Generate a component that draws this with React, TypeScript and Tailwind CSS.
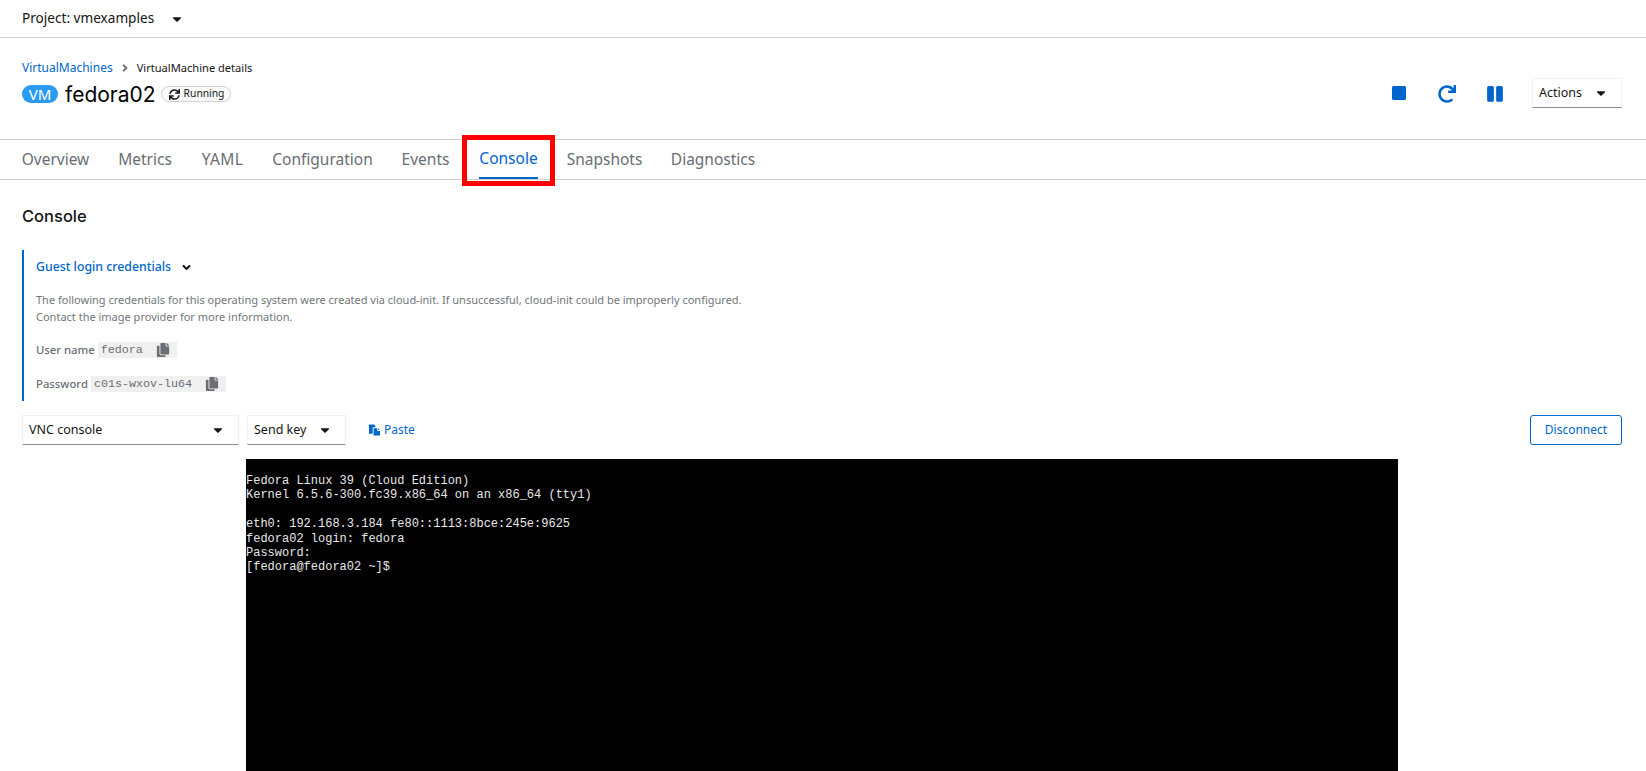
import { FaAngleDown, FaAngleRight, FaCaretDown, FaCopy, FaPause, FaRedo, FaStop, FaSync } from "react-icons/fa";

const tabs = [
  { label: "Overview", width: "w-[67px]" },
  { label: "Metrics", width: "w-[54px]" },
  { label: "YAML", width: "w-[43px] tracking-[0.4px]" },
  { label: "Configuration", width: "w-[99px]" },
  { label: "Events", width: "w-[49px]" },
  { label: "Console", width: "w-[59px]" },
  { label: "Snapshots", width: "w-[75px]" },
  { label: "Diagnostics", width: "w-[84px]" },
];
const terminal = [
  "Fedora Linux 39 (Cloud Edition)",
  "Kernel 6.5.6-300.fc39.x86_64 on an x86_64 (tty1)",
  "\u00a0",
  "eth0: 192.168.3.184 fe80::1113:8bce:245e:9625",
  "fedora02 login: fedora",
  "Password:",
  "[fedora@fedora02 ~]$",
];

function Cred({ label, value }: { label: string; value: string }) {
  return (
    <div className="flex items-center h-4 text-[11.3px] text-[#6a6e73]">
      <span className="font-medium mr-[3px]">{label}</span>
      <span className="flex items-center h-4 bg-[#f0f0f0] pl-[3px] pr-[7px] font-['Liberation_Mono',monospace] text-[11.7px] text-[#6a6e73]">
        <span className="pt-[2px]">{value}</span>
        <FaCopy className="ml-[13px] text-[14px] text-[#6a6e73]" />
      </span>
    </div>
  );
}

function Select({ label, className }: { label: string; className: string }) {
  return (
    <div className={`flex items-center justify-between h-[30px] border border-[#f0f0f0] border-b-[#8a8d90] pl-[6px] pr-[13px] text-[12.5px] text-[#151515] ${className}`}>
      <span>{label}</span>
      <FaCaretDown className="text-[14px] text-[#151515]" />
    </div>
  );
}

export default function App() {
  return (
    <div className="relative h-[771px] w-[1646px] overflow-hidden bg-white font-['Noto_Sans',sans-serif] text-[#151515]">
      <div className="flex h-[38px] items-center border-b border-[#d2d2d2] pl-[22px] text-[13.6px]">
        <span>Project: vmexamples</span>
        <FaCaretDown className="ml-[16px] text-[14px]" />
      </div>

      <div className="flex h-[102px] justify-between border-b border-[#d2d2d2] pl-[22px] pr-6">
        <div className="pt-[23px]">
          <div className="flex items-center h-[14px] text-[12px]">
            <span className="text-[#0066cc]">VirtualMachines</span>
            <FaAngleRight className="mx-[6px] text-[12px] text-[#6a6e73]" />
            <span className="text-[11.1px]">VirtualMachine details</span>
          </div>
          <div className="mt-[6px] flex items-center h-[26px]">
            <span className="flex h-[18px] w-9 items-center justify-center rounded-full bg-[#2b9af3] text-[15px] text-white">VM</span>
            <span className="ml-[7px] font-['Inter',sans-serif] text-[21px] leading-none text-black">fedora02</span>
            <span className="ml-[5px] flex h-4 items-center rounded-full border border-[#d2d2d2] bg-[#fafafa] pl-[7px] pr-[6px] text-[10.3px]">
              <FaSync className="mr-[4px] text-[11px]" />
              Running
            </span>
          </div>
        </div>
        <div className="flex items-start pt-[40px]">
          <FaStop className="mt-[7px] text-[16px] text-[#0066cc]" />
          <FaRedo className="ml-[31px] mt-[7px] text-[18px] text-[#0066cc]" />
          <FaPause className="ml-[30px] mt-[7px] text-[18px] text-[#0066cc]" />
          <div className="ml-[28px] flex h-[30px] w-[90px] items-center justify-between border border-[#f0f0f0] border-b-[#8a8d90] pl-[6px] pr-[13px] text-[12.5px]">
            <span>Actions</span>
            <FaCaretDown className="text-[14px]" />
          </div>
        </div>
      </div>

      <div className="flex h-10 gap-[29px] border-b border-[#d2d2d2] pl-[22px] text-[15.5px] text-[#6a6e73]">
        {tabs.map((t) => (
          <div
            key={t.label}
            className={
              t.label === "Console"
                ? `flex h-[39px] items-center justify-center whitespace-nowrap border-b-2 border-[#0066cc] text-[#0066cc] ${t.width}`
                : `flex h-[39px] items-center justify-center whitespace-nowrap ${t.width}`
            }
          >
            {t.label}
          </div>
        ))}
      </div>

      <div className="px-[22px] pr-6">
        <h1 className="mt-[25px] h-[22px] font-['Inter',sans-serif] text-[16.5px] font-medium leading-[22px] text-[#151515]">Console</h1>

        <div className="mt-[23px] h-[151px] border-l-[2px] border-[#0066cc] pl-[12px] pt-[8px]">
          <div className="flex items-center h-[18px] text-[12.3px] font-medium text-[#0066cc]">
            Guest login credentials
            <FaAngleDown className="ml-[9px] text-[13px] text-[#151515]" />
          </div>
          <p className="mt-[15px] text-[11px] leading-[17px] text-[#72767b]">
            The following credentials for this operating system were created via cloud-init. If unsuccessful, cloud-init could be improperly configured.
            <br />
            Contact the image provider for more information.
          </p>
          <div className="mt-[17px]"><Cred label="User name" value="fedora" /></div>
          <div className="mt-[18px]"><Cred label="Password" value="c01s-wxov-lu64" /></div>
        </div>

        <div className="mt-[14px] flex items-center justify-between">
          <div className="flex items-center">
            <Select label="VNC console" className="w-[217px]" />
            <Select label="Send key" className="ml-2 w-[99px]" />
            <div className="ml-[23px] flex items-center text-[12px] text-[#0066cc]">
              <svg viewBox="0 0 12 12" className="mr-[4px] h-3 w-[11px]" fill="currentColor">
                <path d="M0 0h5.5l1.5 1.5V3H4v7H0z" />
                <path d="M5 4h4v3h3v5H5z" />
                <path d="M10 4l2 2h-2z" />
              </svg>
              Paste
            </div>
          </div>
          <div className="flex h-[30px] w-[92px] items-center justify-center rounded-[3px] border border-[#0066cc] text-[12px] text-[#0066cc]">
            Disconnect
          </div>
        </div>

        <div className="mx-auto mt-[14px] h-[320px] w-[1152px] bg-black pt-[15px] font-['Liberation_Mono',monospace] text-[12px] leading-[14.4px] text-[#e8e8e8]">
          {terminal.map((l, i) => (
            <div key={i} className="whitespace-pre">{l}</div>
          ))}
        </div>
      </div>

      <div className="absolute left-[462px] top-[135px] h-[51px] w-[93px] border-[5px] border-[#ff0000]" />
    </div>
  );
}
